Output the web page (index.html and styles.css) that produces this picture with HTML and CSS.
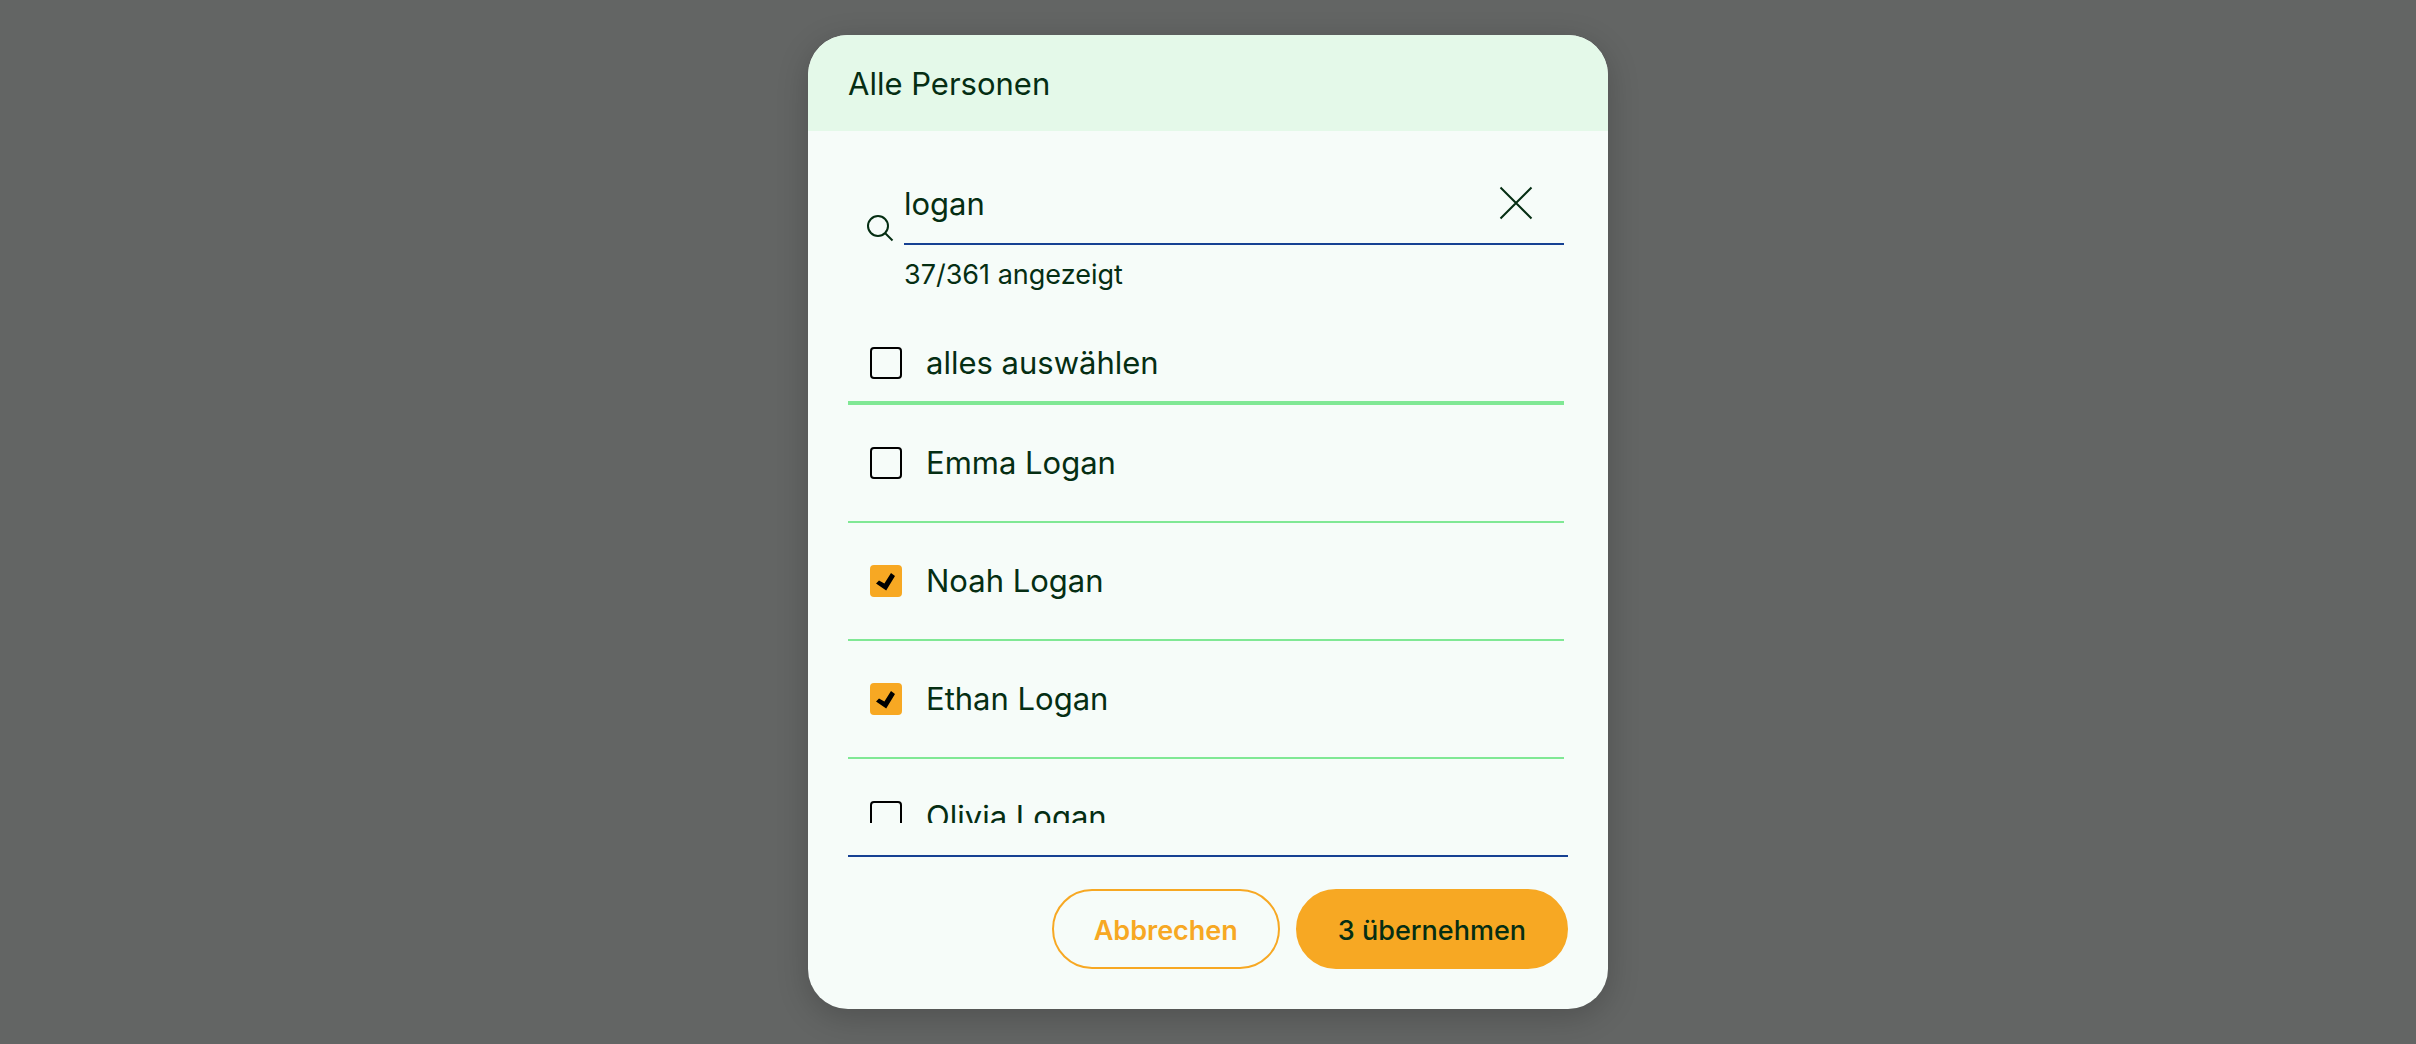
FILE: index.html
```html
<!DOCTYPE html>
<html lang="de">
<head>
<meta charset="utf-8">
<meta name="viewport" content="width=device-width, initial-scale=1">
<title>Alle Personen</title>
<link rel="stylesheet" href="styles.css">
</head>
<body>
<main class="backdrop">
  <form class="dialog" role="dialog" aria-labelledby="dialog-title">
    <h1 class="dialog-title" id="dialog-title">Alle Personen</h1>
    <div class="content">
      <div class="search">
        <svg class="search-icon" viewBox="0 0 26 26" aria-hidden="true"><circle cx="11" cy="11" r="10"/><path d="M18 18l7.500 7.500"/></svg>
        <div class="search-field">
          <input class="search-input" type="text" value="logan" aria-label="Personen suchen" aria-describedby="count">
          <button class="clear" type="button" aria-label="Suche leeren">
            <svg class="clear-icon" viewBox="0 0 32 32" aria-hidden="true"><path d="M0.500 0.500l31 31M31.500 0.500L0.500 31.500"/></svg>
          </button>
        </div>
        <p class="count" id="count">37/361 angezeigt</p>
      </div>
      <label class="option option-all"><input class="check" type="checkbox">alles auswählen</label>
      <div class="list">
        <label class="option"><input class="check" type="checkbox">Emma Logan</label>
        <label class="option"><input class="check" type="checkbox" checked>Noah Logan</label>
        <label class="option"><input class="check" type="checkbox" checked>Ethan Logan</label>
        <label class="option"><input class="check" type="checkbox">Olivia Logan</label>
      </div>
    </div>
    <div class="actions">
      <button class="button button-outline" type="button">Abbrechen</button>
      <button class="button button-primary" type="submit">3 übernehmen</button>
    </div>
  </form>
</main>
</body>
</html>
```
FILE: styles.css
```css
*, *::before, *::after { box-sizing: border-box; }

body {
  margin: 0;
  color: #052e13;
  font: 400 31px/40px Inter, "Liberation Sans", sans-serif;
}

.backdrop {
  display: flex;
  justify-content: center;
  height: 100vh;
  padding: 35px 16px;
  background: #636564;
}

.dialog {
  display: flex;
  flex-direction: column;
  width: 100%;
  max-width: 800px;
  overflow: hidden;
  border-radius: 40px;
  background: #f6fcf9;
  box-shadow: 0 8px 32px rgba(0, 0, 0, 0.2);
}

.dialog-title {
  flex: none;
  margin: 0;
  padding: 29px 40px 27px;
  background: #e4f9e9;
  font-size: 31px;
  font-weight: 400;
}

.content {
  display: flex;
  flex: 1;
  flex-direction: column;
  min-height: 0;
  padding: 32px 44px 32px 40px;
}

.search {
  display: grid;
  grid-template-columns: 56px 1fr;
}

.search-icon {
  align-self: end;
  justify-self: center;
  width: 26px;
  height: 26px;
  margin: 0 0 4px 8px;
  overflow: visible;
  fill: none;
  stroke: currentColor;
  stroke-width: 2;
}

.search-field {
  display: flex;
  align-items: center;
  height: 82px;
  border-bottom: 2px solid #164193;
}

.search-input {
  flex: 1;
  min-width: 0;
  height: 80px;
  padding: 0;
  border: 0;
  outline: 0;
  background: none;
  color: inherit;
  font: inherit;
}

.clear {
  display: flex;
  padding: 0 32px;
  border: 0;
  background: none;
  color: inherit;
  cursor: pointer;
}

.clear-icon {
  width: 32px;
  height: 32px;
  overflow: visible;
  fill: none;
  stroke: currentColor;
  stroke-width: 2;
}

.count {
  grid-column: 2;
  margin: 0;
  padding: 10px 0 8px;
  font-size: 27px;
}

.option {
  display: flex;
  flex: none;
  align-items: center;
  gap: 24px;
  height: 118px;
  padding-left: 22px;
  border-bottom: 2px solid #80e895;
}

.option-all {
  height: 80px;
  margin-top: 22px;
  border-bottom-width: 4px;
}

.check {
  display: grid;
  width: 32px;
  height: 32px;
  margin: 0;
  border: 2px solid #000;
  border-radius: 4px;
  appearance: none;
}

.check:checked {
  border-color: #f7a823;
  background: #f7a823;
}

.check:checked::before {
  width: 20px;
  height: 20px;
  margin: 5px 4px;
  background: #000;
  clip-path: polygon(0 57%, 15% 43%, 42% 58%, 75% 5%, 95% 20%, 51% 93%);
  content: "";
}

.list {
  display: flex;
  flex: 1;
  flex-direction: column;
  min-height: 0;
  overflow: hidden;
}

.actions {
  display: flex;
  flex: none;
  justify-content: flex-end;
  gap: 16px;
  margin: 0 40px;
  padding: 32px 0 40px;
  border-top: 2px solid #164193;
}

.button {
  height: 80px;
  padding: 3px 40px 0;
  border: 2px solid #f7a823;
  border-radius: 40px;
  background: none;
  color: #f7a823;
  font: inherit;
  font-size: 27px;
  font-weight: 600;
  cursor: pointer;
}

.button-primary {
  background: #f7a823;
  color: #052e13;
  font-weight: 500;
}
```
